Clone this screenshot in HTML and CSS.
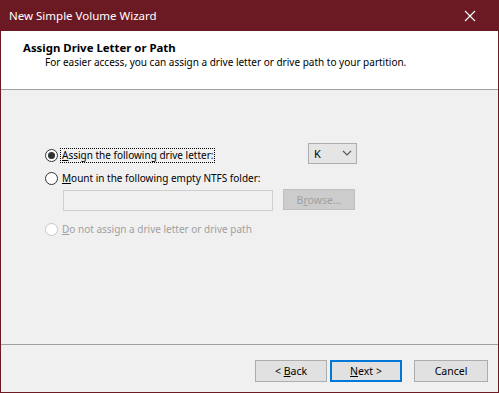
FILE: index.html
```html
<!DOCTYPE html>
<html>
<head>
<meta charset="utf-8">
<link rel="stylesheet" href="styles.css">
</head>
<body>
<div class="window">
  <div class="titlebar">
    <span class="title">New Simple Volume Wizard</span>
    <svg class="close" width="12" height="12" viewBox="0 0 12 12"><path d="M1 1L11 11M11 1L1 11" stroke="#fff" stroke-width="1.2" fill="none"/></svg>
  </div>
  <div class="header">
    <div class="h-title">Assign Drive Letter or Path</div>
    <div class="h-sub">For easier access, you can assign a drive letter or drive path to your partition.</div>
  </div>
  <div class="content">
    <div class="row row-first">
      <span class="radio checked"></span>
      <span class="label focus"><u>A</u>ssign the following drive letter:</span>
      <span class="select"><span>K</span><svg width="10" height="6" viewBox="0 0 10 6"><path d="M1 1L5 5L9 1" stroke="#555" stroke-width="1.1" fill="none"/></svg></span>
    </div>
    <div class="row row-second">
      <span class="radio"></span>
      <span class="label"><u>M</u>ount in the following empty NTFS folder:</span>
    </div>
    <div class="row row-folder">
      <span class="textbox"></span>
      <span class="btn disabled"><span>B<u>r</u>owse...</span></span>
    </div>
    <div class="row row-third">
      <span class="radio dis"></span>
      <span class="label"><u>D</u>o not assign a drive letter or drive path</span>
    </div>
  </div>
  <div class="footer">
    <span class="btn"><span>&lt; <u>B</u>ack</span></span>
    <span class="btn default"><span><u>N</u>ext &gt;</span></span>
    <span class="btn cancel"><span>Cancel</span></span>
  </div>
</div>
</body>
</html>
```

FILE: styles.css
```css
* { box-sizing: border-box; }
html, body { margin: 0; padding: 0; }
body {
  font-family: "Noto Sans", "Open Sans", sans-serif;
  font-size: 10px;
  color: #000;
  background: #f0f0f0;
}
.window {
  width: 499px;
  height: 393px;
  border: 1px solid #6b1a24;
  border-top: 0;
  display: flex;
  flex-direction: column;
  background: #f0f0f0;
}
.titlebar {
  height: 31px;
  background: #6b1a24;
  color: #fff;
  display: flex;
  align-items: center;
  justify-content: space-between;
  padding: 0 23px 0 9px;
  margin: 0 -1px;
}
.title { font-size: 11.5px; }
.header {
  height: 59px;
  background: #fff;
  border-bottom: 1px solid #a0a0a0;
  padding: 9px 0 0 22px;
}
.h-title { font-weight: bold; font-size: 11.4px; line-height: 15px; }
.h-sub { padding-left: 22px; line-height: 15px; font-size: 10px; }
.content {
  flex: 1;
  border-bottom: 1px solid #a0a0a0;
  padding: 55px 0 0 44px;
  display: flex;
  flex-direction: column;
}
.row { display: flex; align-items: center; }
.row-first { height: 20px; }
.row-second { height: 20px; margin-top: 3px; }
.row-folder { margin-top: 2px; padding-left: 18px; align-items: flex-start; }
.row-third { margin-top: 8px; height: 20px; }
.radio {
  width: 13px; height: 13px;
  border: 1px solid #333;
  border-radius: 50%;
  background: #fff;
  display: flex; align-items: center; justify-content: center;
  margin-right: 3px;
}
.radio.checked::after {
  content: "";
  width: 7px; height: 7px; border-radius: 50%; background: #333;
}
.radio.dis { border-color: #c8c8c8; }
.label { font-size: 10px; line-height: 13px; padding: 0 1px; }
.label.focus { outline: 1px dotted #000; }
.row-third .label { color: #a0a0a0; }
.select {
  margin-left: auto;
  margin-right: 141px;
  margin-top: -4px;
  width: 49px; height: 21px;
  border: 1px solid #adadad;
  background: #e5e5e5;
  display: flex; align-items: center; justify-content: space-between;
  padding: 0 4px 0 5px;
  font-size: 11px;
}
.textbox {
  width: 210px; height: 21px;
  border: 1px solid #cfcfcf;
  background: #f0f0f0;
}
.btn {
  width: 73px; height: 22px;
  border: 1px solid #adadad;
  background: #e1e1e1;
  display: flex; align-items: center; justify-content: center;
  font-size: 10.5px;
}
.btn.disabled { margin-left: 10px; margin-top: -1px; color: #a0a0a0; background: #cccccc; border-color: #bfbfbf; width: 72px; height: 21px; }
.footer {
  height: 47px;
  display: flex;
  align-items: flex-start;
  padding: 15px 0 0 254px;
  gap: 3px;
}
.footer .btn { width: 72px; }
.btn.default { border: 1px solid #0078d7; box-shadow: inset 0 0 0 1px #0078d7; }
.btn.cancel { margin-left: 9px; width: 74px; }
u { text-decoration: underline; text-underline-offset: 1px; }
```
